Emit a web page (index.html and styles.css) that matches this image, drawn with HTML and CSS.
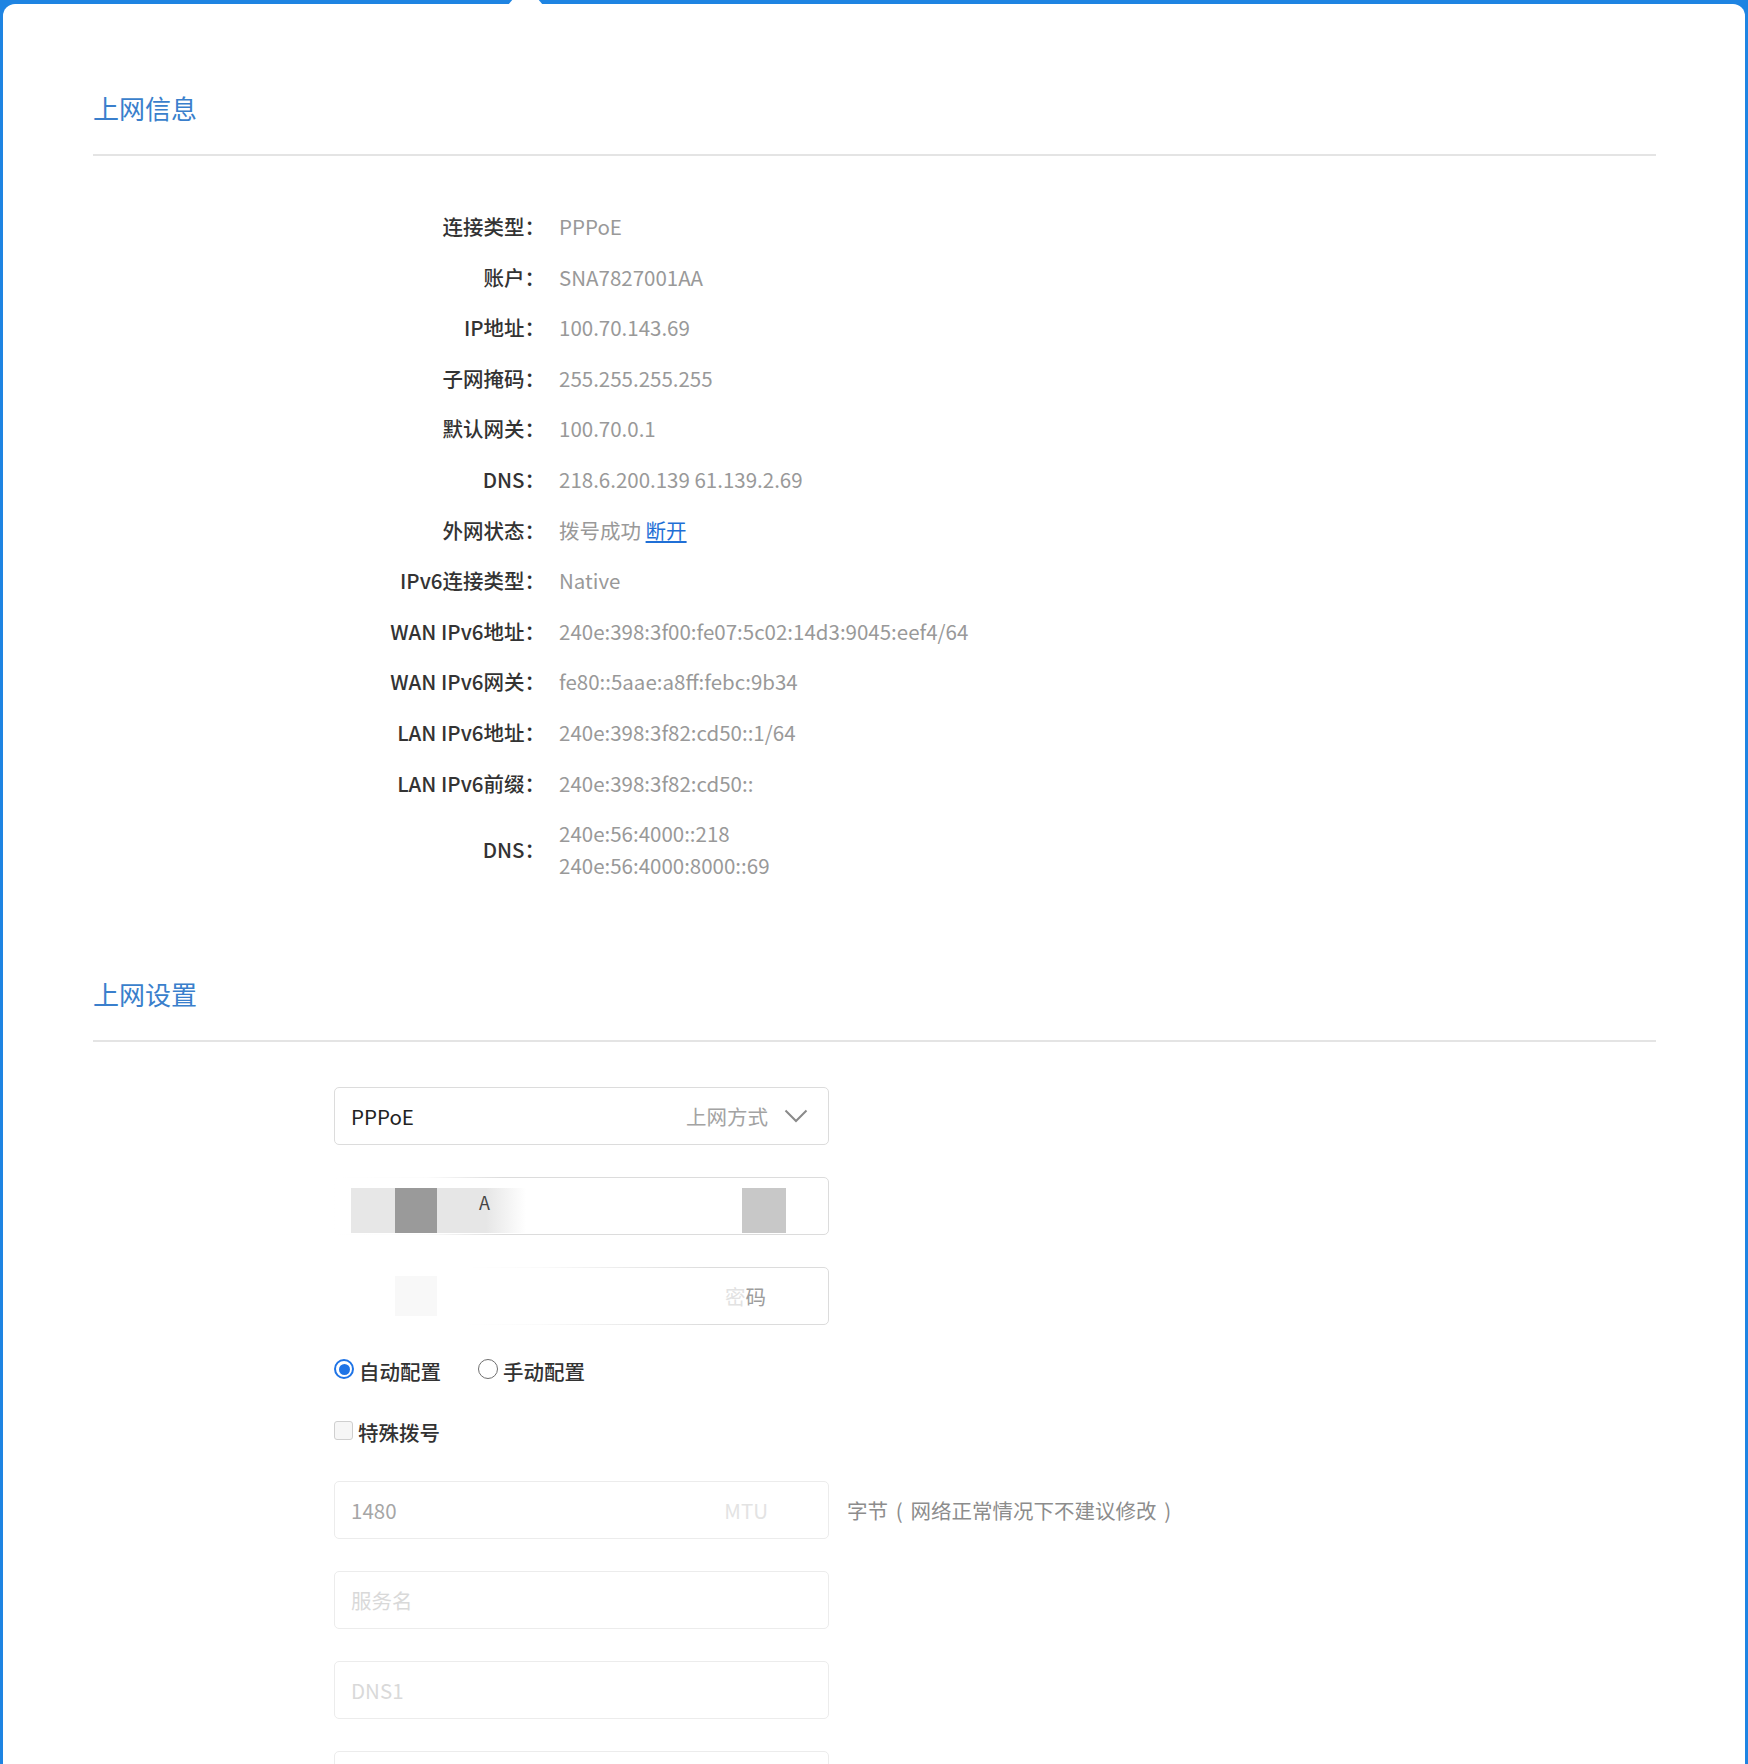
FILE: index.html
```html
<!DOCTYPE html>
<html lang="zh-CN">
<head>
<meta charset="utf-8">
<title>上网设置</title>
<link rel="stylesheet" href="styles.css">
</head>
<body>
<div class="frame">
  <div class="notch"></div>
  <main class="card">
    <section class="section">
      <h2 class="section-title">上网信息</h2>
      <dl class="info">
        <dt>连接类型：</dt><dd>PPPoE</dd>
        <dt>账户：</dt><dd>SNA7827001AA</dd>
        <dt>IP地址：</dt><dd>100.70.143.69</dd>
        <dt>子网掩码：</dt><dd>255.255.255.255</dd>
        <dt>默认网关：</dt><dd>100.70.0.1</dd>
        <dt>DNS：</dt><dd>218.6.200.139 61.139.2.69</dd>
        <dt>外网状态：</dt><dd>拨号成功 <a class="link" href="#">断开</a></dd>
        <dt>IPv6连接类型：</dt><dd>Native</dd>
        <dt>WAN IPv6地址：</dt><dd>240e:398:3f00:fe07:5c02:14d3:9045:eef4/64</dd>
        <dt>WAN IPv6网关：</dt><dd>fe80::5aae:a8ff:febc:9b34</dd>
        <dt>LAN IPv6地址：</dt><dd>240e:398:3f82:cd50::1/64</dd>
        <dt>LAN IPv6前缀：</dt><dd>240e:398:3f82:cd50::</dd>
        <dt class="multi">DNS：</dt><dd class="multi-val">240e:56:4000::218<br>240e:56:4000:8000::69</dd>
      </dl>
    </section>

    <section class="section settings">
      <h2 class="section-title">上网设置</h2>
      <div class="form">
        <div class="field select">
          <span class="value">PPPoE</span>
          <span class="hint">上网方式</span>
          <svg class="chevron" width="24" height="14" viewBox="0 0 24 14"><polyline points="1.5,1.5 12,12 22.5,1.5" fill="none" stroke="#8a8a8a" stroke-width="2"/></svg>
        </div>

        <div class="field account">
          <div class="mask-group">
            <span class="blk light"></span><span class="blk dark"></span><span class="blk light2"><span class="mask-char">A</span></span>
          </div>
          <span class="blk right"></span>
        </div>

        <div class="field password">
          <span class="blk faint"></span>
          <span class="hint pw"><span class="fade-char">密</span>码</span>
        </div>

        <div class="choice-row radios">
          <label class="choice"><span class="radio checked"></span>自动配置</label>
          <label class="choice"><span class="radio"></span>手动配置</label>
        </div>

        <div class="choice-row check">
          <label class="choice"><span class="checkbox"></span>特殊拨号</label>
        </div>

        <div class="field-line">
          <div class="field light-field">
            <span class="value dim">1480</span>
            <span class="hint faded">MTU</span>
          </div>
          <span class="note">字节<span class="paren">(</span>网络正常情况下不建议修改<span class="paren">)</span></span>
        </div>

        <div class="field light-field"><span class="placeholder">服务名</span></div>
        <div class="field light-field"><span class="placeholder">DNS1</span></div>
        <div class="field light-field"></div>
      </div>
    </section>
  </main>
</div>
</body>
</html>
```

FILE: styles.css
```css
* { box-sizing: border-box; }

html, body { margin: 0; }

body {
  background: #1e84e2;
  font-family: "Noto Sans CJK SC", "Noto Sans", sans-serif;
  color: #333;
  overflow: hidden;
}

.frame {
  position: relative;
  padding: 4px 3px 0;
}

.notch {
  position: absolute;
  top: 0;
  left: 508px;
  width: 35px;
  height: 5px;
  background: #fff;
  clip-path: polygon(12% 0, 88% 0, 100% 100%, 0 100%);
}

.card {
  background: #fff;
  border-radius: 12px 12px 0 0;
  padding: 86px 89px 300px 90px;
}

.section-title {
  margin: 0;
  font-size: 26px;
  line-height: 36px;
  font-weight: 400;
  color: #3a7fcc;
  padding-bottom: 28px;
  border-bottom: 2px solid #e4e4e4;
}

/* info list */
.info {
  margin: 55px 0 0;
  display: grid;
  grid-template-columns: 452px 1fr;
  column-gap: 14px;
  row-gap: 19.8px;
  font-size: 20.5px;
  line-height: 30.8px;
}

.info dt {
  text-align: right;
  color: #333;
  font-weight: 500;
  white-space: nowrap;
}

.info dt.multi { align-self: center; }

.info dd {
  margin: 0;
  color: #999;
}

.info dd.multi-val { line-height: 31.5px; }

.link {
  color: #1f6fd6;
  text-decoration: underline;
}

/* settings */
.settings { margin-top: 95px; }

.form {
  margin-top: 45px;
  padding-left: 241px;
  display: flex;
  flex-direction: column;
  align-items: flex-start;
}

.field {
  position: relative;
  width: 495px;
  height: 58px;
  border: 1px solid #dcdcdc;
  border-radius: 5px;
  display: flex;
  align-items: center;
  padding: 0 16px;
  font-size: 20.5px;
  margin-bottom: 32px;
  flex-shrink: 0;
}

.value { color: #222; }
.value.dim { color: #a6a6a6; }

.hint {
  margin-left: auto;
  color: #a3a3a3;
}

.select .hint { margin-right: 16px; }

.chevron { margin-right: 4px; }

/* masked account field */
.account { padding: 0 0 0 16px; align-items: flex-end; }

.account::before {
  content: "";
  position: absolute;
  left: -2px;
  top: -2px;
  bottom: -2px;
  width: 170px;
  background: linear-gradient(to right, #fff 0, rgba(255,255,255,0.9) 55%, rgba(255,255,255,0) 100%);
  pointer-events: none;
}

.mask-group {
  position: relative;
  z-index: 1;
  display: flex;
  height: 45px;
  margin-bottom: 1px;
}

.blk { display: block; height: 45px; }

.light { width: 44px; background: #e7e7e7; }
.dark { width: 42px; background: #9a9a9a; }
.light2 {
  width: 89px;
  position: relative;
  background: linear-gradient(to right, #e6e6e6 0, #e6e6e6 55%, #f4f4f4 80%, #fff 100%);
}

.mask-char {
  position: absolute;
  left: 42px;
  top: 2px;
  font-size: 18px;
  line-height: 24px;
  color: #444;
}

.account .right {
  margin-left: auto;
  margin-right: 42px;
  margin-bottom: 1px;
  width: 44px;
  background: #c8c8c8;
}

/* masked password field */
.password::before {
  content: "";
  position: absolute;
  left: -2px;
  top: -2px;
  bottom: -2px;
  width: 380px;
  background: linear-gradient(to right, #fff 0, #fff 35%, rgba(255,255,255,0.85) 55%, rgba(255,255,255,0) 100%);
  pointer-events: none;
}

.password .faint {
  position: relative;
  z-index: 1;
  margin-left: 44px;
  width: 42px;
  height: 40px;
  background: #f8f8f8;
}

.password .pw {
  position: relative;
  z-index: 1;
  margin-right: 46px;
  color: #9d9d9d;
}

.fade-char { color: #e2e2e2; }

/* radios & checkbox */
.choice-row {
  display: flex;
  align-items: center;
  height: 30px;
  font-size: 20.5px;
  color: #333;
  font-weight: 500;
}

.radios { margin-top: -1px; gap: 37px; }
.check { margin-top: 31px; margin-bottom: 34px; }

.choice {
  display: flex;
  align-items: center;
  gap: 5px;
}

.radio {
  width: 20px;
  height: 20px;
  border-radius: 50%;
  border: 1.5px solid #6f6f6f;
  background: #fff;
  position: relative;
  top: -2px;
}

.radio.checked {
  border: 2px solid #1f74e6;
}

.radio.checked::after {
  content: "";
  position: absolute;
  inset: 2.5px;
  border-radius: 50%;
  background: #1f74e6;
}

.checkbox {
  width: 19px;
  height: 19px;
  border: 1px solid #cfcfcf;
  border-radius: 3px;
  background: #f6f6f6;
  position: relative;
  top: -2px;
}

/* light (disabled-looking) fields */
.field-line {
  display: flex;
  align-items: center;
  gap: 18px;
  margin-bottom: 32px;
}

.field-line .field { margin-bottom: 0; }

.light-field { border-color: #ececec; }

.hint.faded {
  color: #e3e3e3;
  margin-right: 44px;
}

.placeholder { color: #d9d9d9; }

.note {
  font-size: 20.5px;
  color: #8c8c8c;
  white-space: nowrap;
}

.paren {
  display: inline-block;
  width: 1.1em;
  text-align: center;
}
```
